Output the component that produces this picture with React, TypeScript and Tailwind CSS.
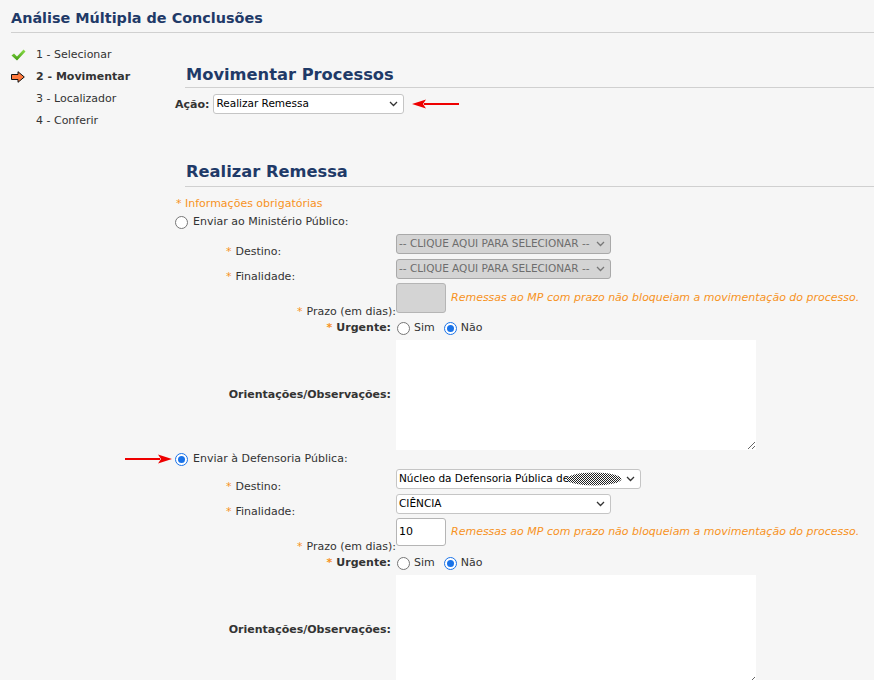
import React from 'react'

const font = { fontFamily: '"DejaVu Sans", Verdana, sans-serif' }

function Chevron({ color = '#333' }: { color?: string }) {
  return (
    <svg width="9" height="6" viewBox="0 0 9 6" className="shrink-0">
      <path d="M1 1l3.5 3.5L8 1" fill="none" stroke={color} strokeWidth="1.3" />
    </svg>
  )
}

function Select({
  w,
  text,
  disabled,
  children,
}: {
  w: string
  text?: string
  disabled?: boolean
  children?: React.ReactNode
}) {
  return (
    <div
      className={`${w} flex h-[20px] items-center justify-between rounded-[3px] border pl-[2px] pr-[5px] text-[10.5px] ${
        disabled ? 'border-[#a9a9a9] bg-[#d4d4d4] text-[#6d6d6d]' : 'border-[#c5c5c5] bg-white text-black'
      }`}
    >
      <span className="flex items-center whitespace-nowrap">
        {text}
        {children}
      </span>
      <Chevron color={disabled ? '#777' : '#333'} />
    </div>
  )
}

function Radio({ checked }: { checked?: boolean }) {
  return checked ? (
    <span className="flex h-[13px] w-[13px] shrink-0 items-center justify-center rounded-full border-[1.5px] border-[#1a73e8] bg-white">
      <span className="h-[7px] w-[7px] rounded-full bg-[#1a73e8]" />
    </span>
  ) : (
    <span className="h-[13px] w-[13px] shrink-0 rounded-full border border-[#767676] bg-white" />
  )
}

function RedArrow({ left }: { left?: boolean }) {
  return (
    <svg width="48" height="10" viewBox="0 0 48 10" className={left ? '' : 'rotate-180'}>
      <path d="M12 5H47" stroke="#ee0000" strokeWidth="2.2" />
      <path d="M0 5L14 0.5L11 5L14 9.5Z" fill="#ee0000" />
    </svg>
  )
}

function Star() {
  return <span className="mr-[4px] text-[#f7931e]">*</span>
}

function Label({
  children,
  bold,
  align = 'right',
  low,
}: {
  children: React.ReactNode
  bold?: boolean
  align?: 'left' | 'right' | 'flush'
  low?: boolean
}) {
  const a = align === 'left' ? 'text-left' : align === 'flush' ? 'text-right' : 'pr-[5px] text-right'
  return (
    <div
      className={`ml-[51px] w-[170px] shrink-0 whitespace-nowrap ${low ? 'leading-[10px]' : 'leading-[14px]'} ${a} ${
        bold ? 'font-bold' : ''
      }`}
    >
      {children}
    </div>
  )
}

function Group({
  checked,
  title,
  destino,
  finalidade,
  prazo,
}: {
  checked?: boolean
  title: string
  destino: React.ReactNode
  finalidade: React.ReactNode
  prazo?: string
}) {
  return (
    <div>
      <div className="relative flex h-[16px] items-center gap-[5px]">
        {checked && (
          <div className="absolute left-[-51px] top-[3px]">
            <RedArrow />
          </div>
        )}
        <Radio checked={checked} />
        <span>{title}</span>
      </div>
      <div className={checked ? 'mt-0' : 'mt-[2px]'}>
        <div className="flex items-end">
          <Label align="left" low>
            <Star />
            Destino:
          </Label>
          <div className="pb-[3px] pt-[2px]">{destino}</div>
        </div>
        <div className="flex items-end">
          <Label align="left" low>
            <Star />
            Finalidade:
          </Label>
          <div className="pb-[3px] pt-[2px]">{finalidade}</div>
        </div>
        <div className="flex items-end">
          <Label align="flush" low>
            <Star />
            Prazo (em dias):
          </Label>
          <div className={`flex items-center gap-[5px] pt-[1px] ${checked ? 'pb-[6px]' : 'pb-[4px]'}`}>
            <div
              className={`${checked ? 'h-[28px] bg-white' : 'h-[30px] bg-[#d4d4d4]'} w-[50px] rounded-[3px] border border-[#b5b5b5] pl-[2px] pt-[5px] text-[11px] text-black`}
            >
              {prazo}
            </div>
            <span className="text-[11px] italic text-[#f7931e]">Remessas ao MP com prazo não bloqueiam a movimentação do processo.</span>
          </div>
        </div>
        <div className="mt-[1px] flex h-[20px] items-center">
          <Label bold>
            <Star />
            Urgente:
          </Label>
          <div className="flex items-center gap-[4px] pl-[1px]">
            <Radio />
            <span>Sim</span>
            <span className="ml-[5px]">
              <Radio checked />
            </span>
            <span>Não</span>
          </div>
        </div>
        <div className="mt-[2px] flex items-center">
          <Label bold>Orientações/Observações:</Label>
          <textarea readOnly className="block h-[110px] w-[360px] resize border-0 bg-white outline-none" />
        </div>
      </div>
    </div>
  )
}

function Blob() {
  return (
    <svg width="56" height="14" viewBox="0 0 56 14" className="-ml-[3px]">
      <defs>
        <pattern id="chk" width="2" height="2" patternUnits="userSpaceOnUse">
          <rect width="2" height="2" fill="#ffffff" />
          <rect width="1" height="1" fill="#222" />
          <rect x="1" y="1" width="1" height="1" fill="#222" />
        </pattern>
      </defs>
      <ellipse cx="28" cy="7" rx="27.5" ry="6.5" fill="url(#chk)" />
    </svg>
  )
}

export default function App() {
  return (
    <div className="min-h-[680px] w-[874px] overflow-hidden bg-[#f6f6f6] text-[11px] text-[#333]" style={font}>
      <div className="ml-[11px] border-b border-[#d0d0d0] pb-[4px] pt-[8px]">
        <h1 className="text-[14.4px] font-bold leading-[20px] text-[#1f3a68]">Análise Múltipla de Conclusões</h1>
      </div>
      <div className="flex">
        <ul className="w-[164px] shrink-0 pl-[11px] pt-[11px]">
          <li className="flex h-[22px] items-center">
            <svg width="15" height="12" viewBox="0 0 15 12" className="mr-[10px]">
              <defs>
                <linearGradient id="g" x1="0" y1="0" x2="0" y2="1">
                  <stop offset="0" stopColor="#8ee04a" />
                  <stop offset="1" stopColor="#3e9a12" />
                </linearGradient>
              </defs>
              <path d="M0.5 6.5L3 4.5L6 7.5L12.5 0.5L14.5 2.5L6 11.5Z" fill="url(#g)" />
            </svg>
            1 - Selecionar
          </li>
          <li className="flex h-[22px] items-center font-bold">
            <svg width="14" height="12" viewBox="0 0 14 12" className="mr-[11px]">
              <path d="M0.5 3.5H7V0.7L13.3 6L7 11.3V8.5H0.5Z" fill="#ff7a3d" stroke="#111" strokeWidth="1" />
            </svg>
            2 - Movimentar
          </li>
          <li className="flex h-[22px] items-center pl-[25px]">3 - Localizador</li>
          <li className="flex h-[22px] items-center pl-[25px]">4 - Conferir</li>
        </ul>
        <div className="flex-1 pl-[11px]">
          <h2 className="ml-[10px] mt-[32px] border-b border-[#d0d0d0] pb-[2px] pl-[1px] text-[16.3px] font-bold leading-[20px] text-[#1f3a68]">
            Movimentar Processos
          </h2>
          <div className="mt-[6px] flex items-center gap-[4px]">
            <span className="mt-[3px] font-bold">Ação:</span>
            <Select w="w-[191px]" text="Realizar Remessa" />
            <span className="ml-[4px]">
              <RedArrow left />
            </span>
          </div>
          <h2 className="ml-[10px] mt-[48px] border-b border-[#d0d0d0] pb-[4px] pl-[1px] text-[16.3px] font-bold leading-[20px] text-[#1f3a68]">
            Realizar Remessa
          </h2>
          <div className="mt-[10px] pl-[1px] leading-[14px] text-[#f7931e]">* Informações obrigatórias</div>
          <div className="mt-[3px]">
            <Group
              title="Enviar ao Ministério Público:"
              destino={<Select w="w-[215px]" text="-- CLIQUE AQUI PARA SELECIONAR --" disabled />}
              finalidade={<Select w="w-[215px]" text="-- CLIQUE AQUI PARA SELECIONAR --" disabled />}
            />
          </div>
          <div className="mt-[1px]">
            <Group
              checked
              title="Enviar à Defensoria Pública:"
              destino={
                <Select w="w-[245px]" text="Núcleo da Defensoria Pública de">
                  <Blob />
                </Select>
              }
              finalidade={<Select w="w-[215px]" text="CIÊNCIA" />}
              prazo="10"
            />
          </div>
        </div>
      </div>
    </div>
  )
}
